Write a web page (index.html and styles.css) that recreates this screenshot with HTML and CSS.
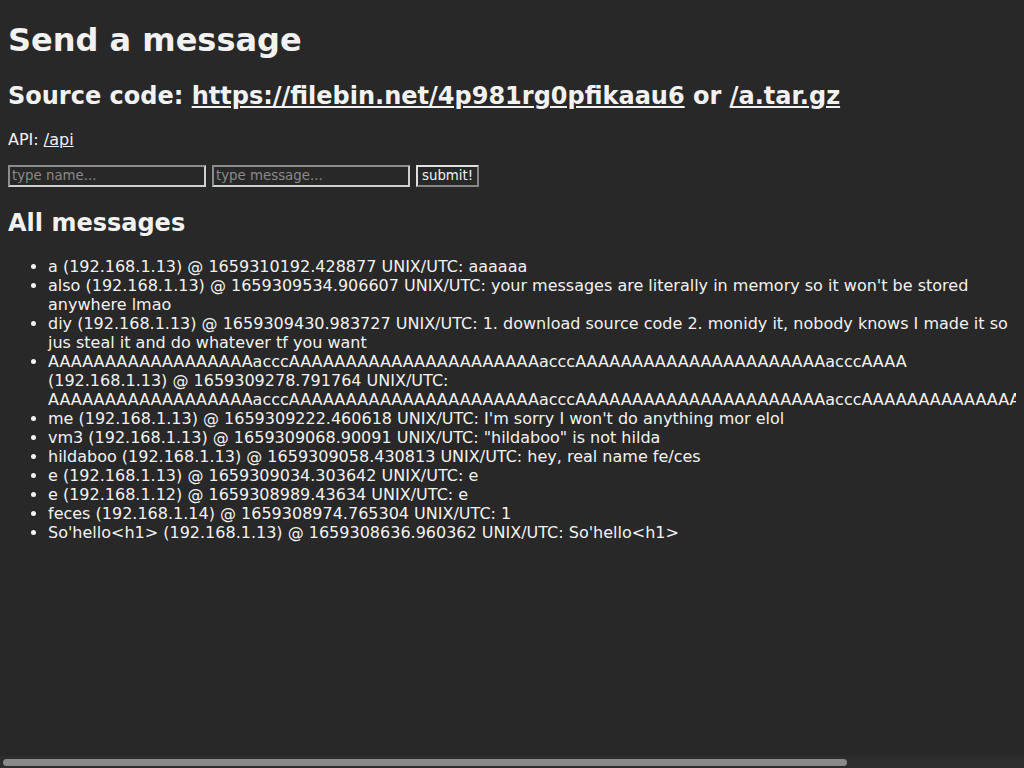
FILE: index.html
```html
<!DOCTYPE html>
<html lang="en">
<head>
    <meta charset="UTF-8">
    <title>Send a message</title>
    <link rel="stylesheet" href="styles.css">
</head>
<body>
    <h1>Send a message</h1>
    <h2>Source code: <a href="https://filebin.net/4p981rg0pfikaau6">https://filebin.net/4p981rg0pfikaau6</a> or <a href="/a.tar.gz">/a.tar.gz</a></h2>
    <p>API: <a href="/api">/api</a></p>

    <form class="send-form" action="/" method="post">
        <input type="text" name="name" placeholder="type name...">
        <input type="text" name="message" placeholder="type message...">
        <button type="submit">submit!</button>
    </form>

    <h2>All messages</h2>
    <ul class="messages">
        <li>a (192.168.1.13) @ 1659310192.428877 UNIX/UTC: aaaaaa</li>
        <li>also (192.168.1.13) @ 1659309534.906607 UNIX/UTC: your messages are literally in memory so it won't be stored anywhere lmao</li>
        <li>diy (192.168.1.13) @ 1659309430.983727 UNIX/UTC: 1. download source code 2. monidy it, nobody knows I made it so jus steal it and do whatever tf you want</li>
        <li>AAAAAAAAAAAAAAAAAAacccAAAAAAAAAAAAAAAAAAAAAAacccAAAAAAAAAAAAAAAAAAAAAAacccAAAA (192.168.1.13) @ 1659309278.791764 UNIX/UTC: AAAAAAAAAAAAAAAAAAacccAAAAAAAAAAAAAAAAAAAAAAacccAAAAAAAAAAAAAAAAAAAAAAacccAAAAAAAAAAAAAAAAAAAAAAAAAAAAAAAAAA</li>
        <li>me (192.168.1.13) @ 1659309222.460618 UNIX/UTC: I'm sorry I won't do anything mor elol</li>
        <li>vm3 (192.168.1.13) @ 1659309068.90091 UNIX/UTC: "hildaboo" is not hilda</li>
        <li>hildaboo (192.168.1.13) @ 1659309058.430813 UNIX/UTC: hey, real name fe/ces</li>
        <li>e (192.168.1.13) @ 1659309034.303642 UNIX/UTC: e</li>
        <li>e (192.168.1.12) @ 1659308989.43634 UNIX/UTC: e</li>
        <li>feces (192.168.1.14) @ 1659308974.765304 UNIX/UTC: 1</li>
        <li>So'hello&lt;h1&gt; (192.168.1.13) @ 1659308636.960362 UNIX/UTC: So'hello&lt;h1&gt;</li>
    </ul>

    <!-- horizontal scrollbar, as the browser draws it -->
    <div class="hscroll" aria-hidden="true"><div class="hscroll-thumb"></div></div>
</body>
</html>
```

FILE: styles.css
```css
html {
    background-color: #282828;
}

body {
    margin: 0 8px 8px;
    font-family: 'DejaVu Sans', sans-serif;
    color: #f2f2f2;
}

h1 {
    margin: 21.44px 0 22.44px;
}

a {
    color: #f2f2f2;
}

.send-form {
    display: flex;
    align-items: center;
    margin: 16px 0 0;
    padding-bottom: 2px;
}

.send-form input {
    box-sizing: border-box;
    width: 198px;
    height: 22px;
    margin-right: 6px;
    padding: 1px 2px;
    background-color: #282828;
    color: #f2f2f2;
    font-family: 'DejaVu Sans', sans-serif;
    font-size: 13.33px;
    border: 2px solid;
    border-color: #8c8c8c #cfcfcf #cfcfcf #8c8c8c;
}

.send-form input::placeholder {
    color: #8a8a8a;
}

.send-form button {
    box-sizing: border-box;
    height: 22px;
    padding: 0 4px;
    background-color: #282828;
    color: #f2f2f2;
    font-family: 'DejaVu Sans', sans-serif;
    font-size: 13.33px;
    border: 2px solid;
    border-color: #e0e0e0 #858585 #858585 #e0e0e0;
}

.messages {
    padding-left: 40px;
}

.hscroll {
    position: fixed;
    left: 0;
    right: 0;
    bottom: 0;
    height: 12px;
    background-color: #2d2d2d;
}

.hscroll-thumb {
    width: 844px;
    height: 7px;
    margin: 3px 0 0 3px;
    background-color: #8a8a8a;
    border-radius: 4px;
}
```
